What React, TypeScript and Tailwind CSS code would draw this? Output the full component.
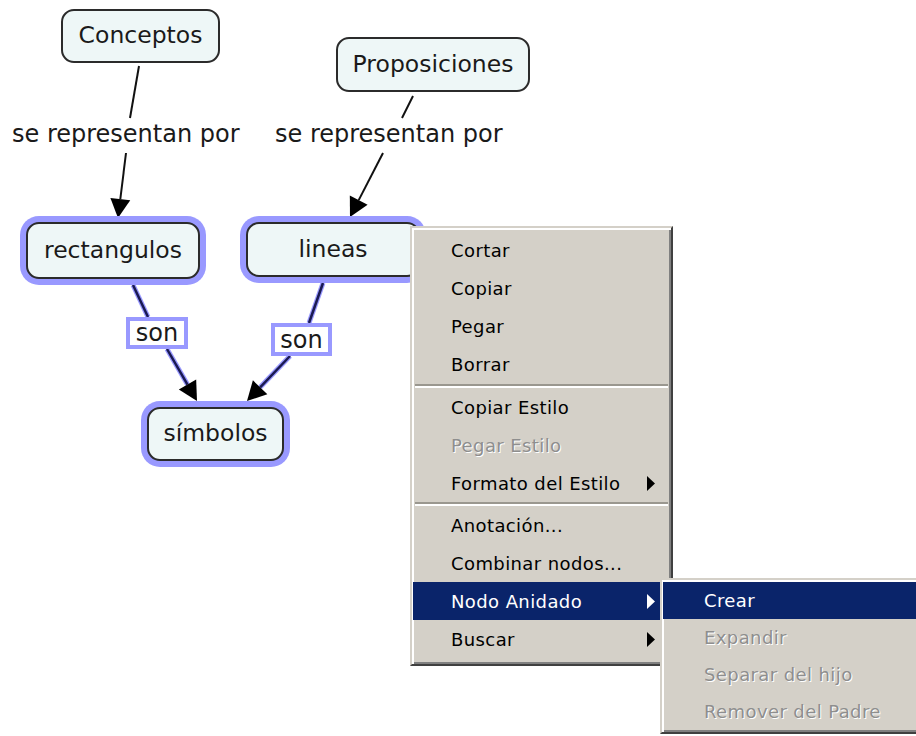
import React from 'react';

type Pt = [number, number];

const head = (from: Pt, tip: Pt, len = 19, half = 10) => {
  const dx = tip[0] - from[0];
  const dy = tip[1] - from[1];
  const d = Math.hypot(dx, dy);
  const ux = dx / d;
  const uy = dy / d;
  const bx = tip[0] - ux * len;
  const by = tip[1] - uy * len;
  return {
    base: [bx, by] as Pt,
    points: `${tip[0]},${tip[1]} ${bx - uy * half},${by + ux * half} ${bx + uy * half},${by - ux * half}`,
  };
};

const Edge = ({ a, b, selected }: { a: Pt; b: Pt; selected?: boolean }) =>
  selected ? (
    <g>
      <line x1={a[0]} y1={a[1]} x2={b[0]} y2={b[1]} stroke="#9999ff" strokeWidth={5} />
      <line x1={a[0]} y1={a[1]} x2={b[0]} y2={b[1]} stroke="#1a1a52" strokeWidth={2.5} />
    </g>
  ) : (
    <line x1={a[0]} y1={a[1]} x2={b[0]} y2={b[1]} stroke="#111" strokeWidth={2} />
  );

const Arrow = ({ from, tip, selected }: { from: Pt; tip: Pt; selected?: boolean }) => {
  const h = head(from, tip);
  return (
    <g>
      <Edge a={from} b={h.base} selected={selected} />
      <polygon points={h.points} fill="#000" />
    </g>
  );
};

const MenuArrow = ({ white }: { white?: boolean }) => (
  <svg width="8" height="15" viewBox="0 0 8 15">
    <polygon points="0,0 8,7.5 0,15" fill={white ? '#fff' : '#000'} />
  </svg>
);

interface ItemProps {
  label: string;
  disabled?: boolean;
  active?: boolean;
  arrow?: boolean;
  h?: string;
  pl?: string;
}

const MenuItem: React.FC<ItemProps> = ({ label, disabled, active, arrow, h = 'h-[38px]', pl = 'pl-[38px]' }) => (
  <div
    className={`${h} ${pl} pr-[15px] flex items-center justify-between whitespace-nowrap ${
      active ? 'bg-[#0a246a] text-white' : disabled ? 'text-[#8e8e8e] [text-shadow:1px_1px_0_#fff]' : 'text-black'
    }`}
  >
    <span>{label}</span>
    {arrow && <MenuArrow white={active} />}
  </div>
);

const Separator = ({ h }: { h: string }) => (
  <div className={`${h} flex flex-col justify-center px-[2px]`}>
    <div className="h-[2px] bg-[#9a978f]" />
    <div className="h-[2px] bg-white" />
  </div>
);

const menuFrame =
  'absolute bg-[#d4d0c8] border-[2px] border-t-[#d4d0c8] border-l-[#d4d0c8] border-r-[#404040] border-b-[#404040] shadow-[inset_2px_2px_0_#fff,inset_-2px_-2px_0_#808080] text-[18px] tracking-[0.4px]';

const nodeBase =
  'absolute flex items-center justify-center rounded-[13px] border-2 border-[#2b2b2b] bg-[#eef7f7] text-[#1a1a1a]';

export default function App() {
  return (
    <div
      className="relative w-[916px] h-[736px] bg-white overflow-hidden"
      style={{ fontFamily: '"DejaVu Sans", Verdana, sans-serif' }}
    >
      <svg className="absolute inset-0" width="916" height="736">
        <Edge a={[139, 66]} b={[130, 118]} />
        <Arrow from={[126, 153]} tip={[118, 218]} />
        <Edge a={[413, 96]} b={[402, 118]} />
        <Arrow from={[383, 153]} tip={[350, 217]} />
        <Edge a={[133, 285]} b={[148, 317]} selected />
        <Arrow from={[167, 349]} tip={[197, 401]} selected />
        <Edge a={[323, 283]} b={[309, 323]} selected />
        <Arrow from={[290, 356]} tip={[247, 401]} selected />
      </svg>

      <div className="text-[23.5px] leading-none">
        <div className={`${nodeBase} left-[61px] top-[9px] w-[159px] h-[54px]`}>Conceptos</div>
        <div className={`${nodeBase} left-[336px] top-[37px] w-[194px] h-[55px]`}>Proposiciones</div>

        <div className="absolute left-[12px] top-[122px] whitespace-nowrap text-[24px] text-[#1a1a1a]">se representan por</div>
        <div className="absolute left-[275px] top-[122px] whitespace-nowrap text-[24px] text-[#1a1a1a]">se representan por</div>

        <div className={`${nodeBase} left-[26px] top-[222px] w-[174px] h-[57px] shadow-[0_0_0_6px_#9999ff]`}>
          rectangulos
        </div>
        <div className={`${nodeBase} left-[246px] top-[222px] w-[174px] h-[55px] shadow-[0_0_0_6px_#9999ff]`}>
          lineas
        </div>
        <div className={`${nodeBase} left-[147px] top-[407px] w-[137px] h-[54px] shadow-[0_0_0_6px_#9999ff]`}>
          símbolos
        </div>

        <div className="absolute left-[126px] top-[317px] w-[62px] h-[32px] border-[4px] border-[#9999ff] bg-white flex items-center justify-center text-[24px] text-[#1a1a1a]">
          son
        </div>
        <div className="absolute left-[271px] top-[323px] w-[61px] h-[33px] border-[4px] border-[#9999ff] bg-white flex items-center justify-center text-[24px] text-[#1a1a1a]">
          son
        </div>
      </div>

      <div className={`${menuFrame} left-[410px] top-[226px] w-[263px] pt-[3px] pb-[6px] px-[1px]`}>
        <MenuItem label="Cortar" />
        <MenuItem label="Copiar" />
        <MenuItem label="Pegar" />
        <MenuItem label="Borrar" />
        <Separator h="h-[5px]" />
        <MenuItem label="Copiar Estilo" />
        <MenuItem label="Pegar Estilo" disabled />
        <MenuItem label="Formato del Estilo" arrow />
        <Separator h="h-[4px]" />
        <MenuItem label="Anotación..." />
        <MenuItem label="Combinar nodos..." />
        <MenuItem label="Nodo Anidado" active arrow />
        <MenuItem label="Buscar" arrow />
      </div>

      <div className={`${menuFrame} left-[660px] top-[578px] w-[280px] pt-[2px] pb-[2px] px-[1px]`}>
        <MenuItem label="Crear" active h="h-[37px]" pl="pl-[41px]" />
        <MenuItem label="Expandir" disabled h="h-[37px]" pl="pl-[41px]" />
        <MenuItem label="Separar del hijo" disabled h="h-[37px]" pl="pl-[41px]" />
        <MenuItem label="Remover del Padre" disabled h="h-[37px]" pl="pl-[41px]" />
      </div>
    </div>
  );
}
